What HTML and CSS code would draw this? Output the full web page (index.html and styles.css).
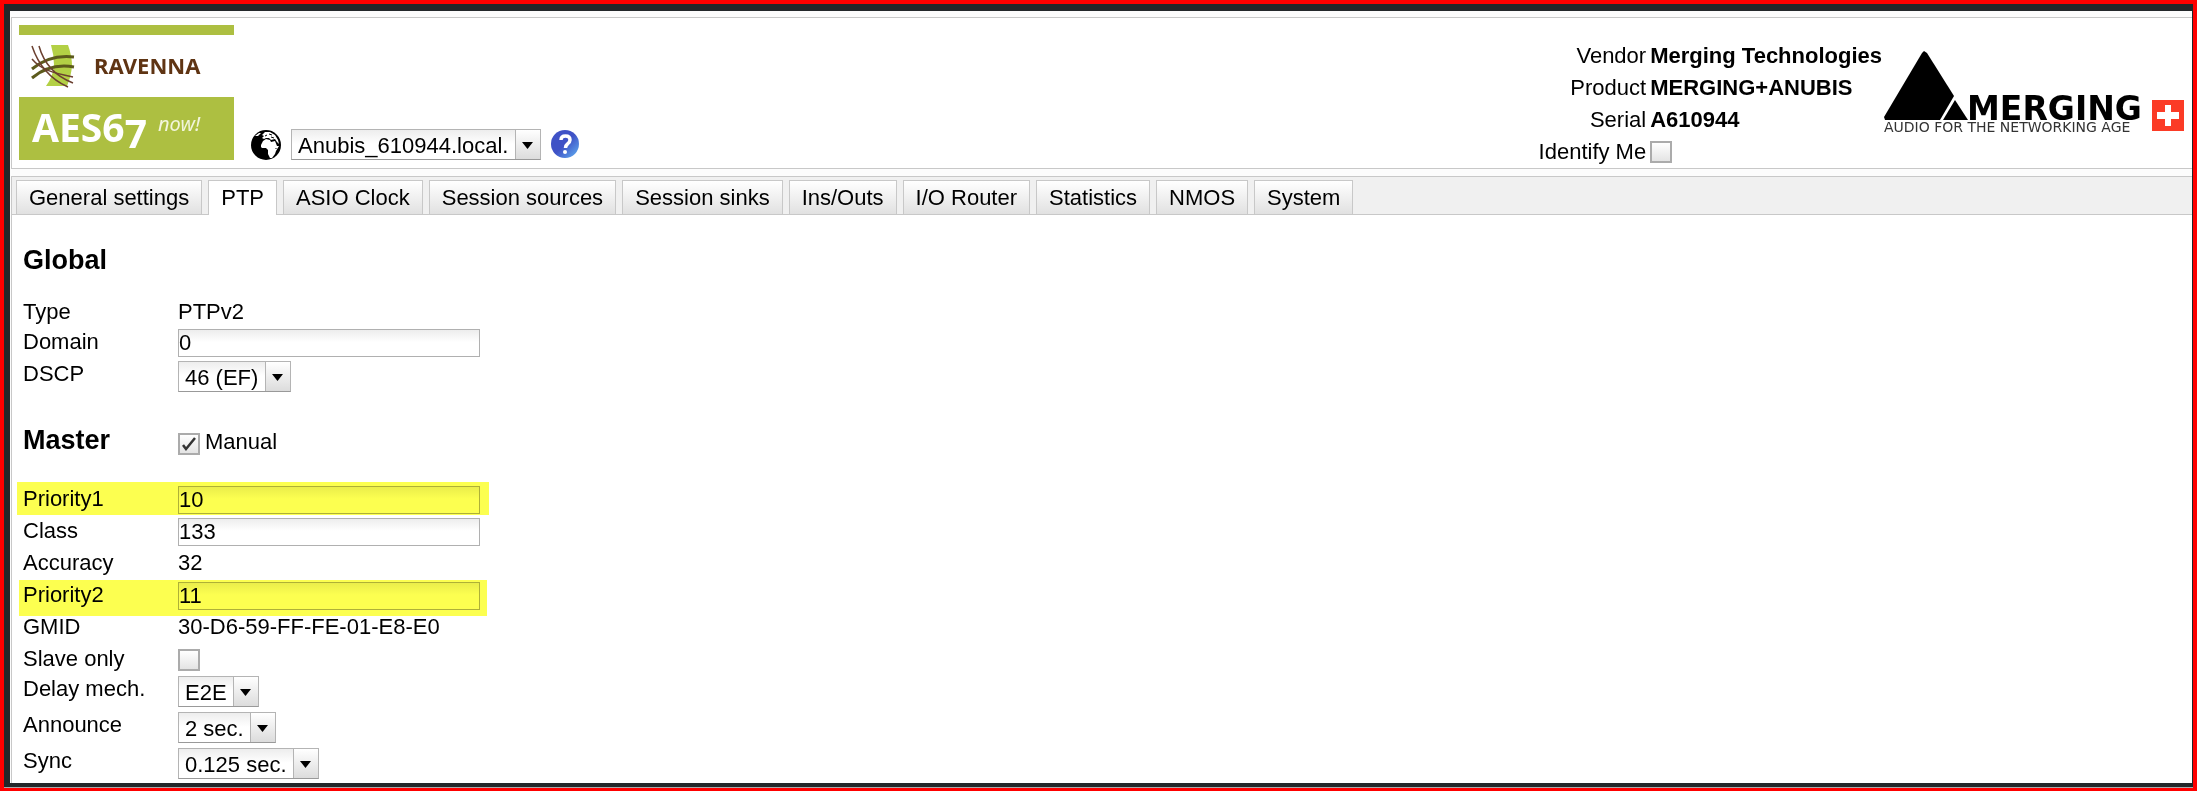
FILE: index.html
```html
<!DOCTYPE html>
<html lang="en">
<head>
    <meta charset="UTF-8">
    <meta name="viewport" content="width=device-width, initial-scale=1.0">
    <title>Anubis_610944.local. - PTP</title>
    <link rel="stylesheet" href="styles.css">
</head>
<body>
<div class="frame">
<div class="page">
    <header class="header">
        <svg class="ravenna-logo" width="215" height="135" viewBox="0 0 215 135" role="img" aria-label="RAVENNA AES67 now!">
            <rect width="215" height="135" fill="#adbf41"/>
            <rect y="10" width="215" height="62" fill="#fff"/>
            <path d="M32 20h17q4 11 4 21-1 11-5 20H27q7-9 8-21 0-10-3-20z" fill="#b3d045"/>
            <g fill="none" stroke="#5c5a1c" stroke-width="3">
                <path d="M13 44C25 34 38 30 55 32"/>
                <path d="M13 53C25 43 38 39 55 42"/>
            </g>
            <g fill="none" stroke="#6b4030" stroke-width="1.5">
                <path d="M13 21C19 39 31 54 49 62"/>
                <path d="M20 21C25 39 36 51 54 58"/>
                <path d="M13 34C22 45 35 48 54 52"/>
            </g>
            <text class="ravenna-name" x="75" y="49">RAVENNA</text>
            <text class="ravenna-aes" x="13" y="117">AES6<tspan dy="6">7</tspan></text>
            <text class="ravenna-now" x="139" y="106">now!</text>
        </svg>

        <div class="device">
            <svg width="30" height="30" viewBox="0 0 30 30" aria-hidden="true">
                <circle cx="15" cy="15" r="15" fill="#000"/>
                <path d="M10 15l2-4 3-2 4 1 1 2 4-1 2 5h2l-3 5-1 3-3 4-2 0-2-4 0-4-2-2-4 0-1-1z" fill="#fff"/>
                <path d="M11 5l3-3 5 0 5 3 3 5 1 4-2-2-2-3-4 1-2-2-3 0-2 1-2-1 2-2z" fill="#fff"/>
                <path d="M4 6l4-3 2 0-3 3z" fill="#fff"/>
                <path d="M14 6l2-1M18 4l3 1M20 7l3 1M25 18l0 1" stroke="#000" fill="none"/>
            </svg>
            <select class="select" aria-label="Device">
                <option>Anubis_610944.local.</option>
            </select>
            <a class="help" href="#help" aria-label="Help">
                <svg width="29" height="29" viewBox="0 0 29 29" aria-hidden="true">
                    <defs>
                        <linearGradient id="helpFill" x1="0" y1="0" x2="1" y2="1">
                            <stop offset="0.5" stop-color="#3f52c6"/>
                            <stop offset="1" stop-color="#62b4f4"/>
                        </linearGradient>
                    </defs>
                    <circle cx="14" cy="14" r="14" fill="url(#helpFill)"/>
                    <path d="M10 10q0-4 4.500-4t4.500 4q0 2-2.500 4-2 1.500-2 4" fill="none" stroke="#fff" stroke-width="3.500"/>
                    <circle cx="14" cy="22" r="2" fill="#fff"/>
                </svg>
            </a>
        </div>

        <div class="info">
            <span class="info-label">Vendor</span><b>Merging Technologies</b>
            <span class="info-label">Product</span><b>MERGING+ANUBIS</b>
            <span class="info-label">Serial</span><b>A610944</b>
            <label class="info-label" for="identify">Identify Me</label>
            <input class="checkbox" type="checkbox" id="identify">
        </div>

        <svg class="merging-logo" width="300" height="84" viewBox="0 0 300 84" role="img" aria-label="Merging - Audio for the networking age">
            <path d="M40 0l3 2 27 43-14 24H1l-1-3L38 2z" fill="#000"/>
            <path d="M71 49l13 20H59z" fill="#000"/>
            <text class="merging-name" x="83" y="69">MERGING</text>
            <text class="merging-tag" x="0" y="81">AUDIO FOR THE NETWORKING AGE</text>
            <rect x="268" y="49" width="32" height="31" fill="#fb3b26"/>
            <path d="M281 54h6v7h8v7h-8v7h-6v-7h-8v-7h8z" fill="#fff"/>
        </svg>
    </header>

    <nav class="tabs">
        <a class="tab" href="#general">General settings</a>
        <a class="tab active" href="#ptp">PTP</a>
        <a class="tab" href="#asio">ASIO Clock</a>
        <a class="tab" href="#sources">Session sources</a>
        <a class="tab" href="#sinks">Session sinks</a>
        <a class="tab" href="#ins-outs">Ins/Outs</a>
        <a class="tab" href="#router">I/O Router</a>
        <a class="tab" href="#statistics">Statistics</a>
        <a class="tab" href="#nmos">NMOS</a>
        <a class="tab" href="#system">System</a>
    </nav>

    <main class="content">
        <h2 class="title">Global</h2>
        <div class="settings">
            <div class="row row-check">
                <span class="name">Type</span>
                <span class="value">PTPv2</span>
            </div>
            <div class="row">
                <label class="name" for="domain">Domain</label>
                <input class="text" type="text" id="domain" value="0">
            </div>
            <div class="row row-select">
                <label class="name" for="dscp">DSCP</label>
                <select class="select" id="dscp"><option>46 (EF)</option></select>
            </div>
        </div>

        <div class="master">
            <h2 class="title">Master</h2>
            <input class="checkbox" type="checkbox" id="manual" checked>
            <label for="manual">Manual</label>
        </div>
        <div class="settings">
            <div class="row">
                <label class="name" for="priority1">Priority1</label>
                <input class="text" type="text" id="priority1" value="10">
                <span class="marker marker-first"></span>
            </div>
            <div class="row">
                <label class="name" for="class">Class</label>
                <input class="text" type="text" id="class" value="133">
            </div>
            <div class="row">
                <span class="name">Accuracy</span>
                <span class="value">32</span>
            </div>
            <div class="row">
                <label class="name" for="priority2">Priority2</label>
                <input class="text" type="text" id="priority2" value="11">
                <span class="marker marker-second"></span>
            </div>
            <div class="row">
                <span class="name">GMID</span>
                <span class="value">30-D6-59-FF-FE-01-E8-E0</span>
            </div>
            <div class="row row-check">
                <label class="name" for="slave">Slave only</label>
                <input class="checkbox" type="checkbox" id="slave">
            </div>
            <div class="row row-select">
                <label class="name" for="delay">Delay mech.</label>
                <select class="select" id="delay"><option>E2E</option></select>
            </div>
            <div class="row row-select">
                <label class="name" for="announce">Announce</label>
                <select class="select" id="announce"><option>2 sec.</option></select>
            </div>
            <div class="row row-select">
                <label class="name" for="sync">Sync</label>
                <select class="select" id="sync"><option>0.125 sec.</option></select>
            </div>
        </div>
    </main>
</div>
</div>
</body>
</html>
```
FILE: styles.css
```css
* {
    box-sizing: border-box;
}
body {
    margin: 0;
    font-family: "Liberation Sans", Arial, sans-serif;
    font-size: 22px;
    line-height: 26px;
    color: #000;
}
.frame {
    display: flex;
    min-height: 100vh;
    padding-bottom: 1px;
    border: 4px solid #ff0000;
    border-bottom-width: 3px;
    background: #aaa;
}
.page {
    flex: 1;
    display: flex;
    flex-direction: column;
    padding: 6px 0 0 1px;
    border: solid #23272a;
    border-width: 7px 1px 4px 6px;
    background: #fcfcfc;
}
.header {
    display: flex;
    align-items: flex-start;
    padding: 7px 8px 0 7px;
    border: 1px solid #c8c8c8;
    border-right: none;
    background: #fff;
}
.ravenna-logo {
    flex: none;
}
.ravenna-name {
    font: bold 22px "Noto Sans", sans-serif;
    fill: #5f3413;
}
.ravenna-aes {
    font: bold 39px "Noto Sans", sans-serif;
    fill: #fff;
}
.ravenna-now {
    font: italic 20px "Noto Sans", sans-serif;
    fill: #f2f5dc;
}
.device {
    display: flex;
    align-items: center;
    align-self: flex-end;
    gap: 10px;
    margin: 0 0 8px 17px;
}
.device svg {
    display: block;
}
.info {
    display: grid;
    grid-template-columns: auto auto;
    grid-auto-rows: 32px;
    column-gap: 4px;
    align-items: center;
    margin: 15px 2px 0 auto;
}
.info-label {
    text-align: right;
}
.merging-logo {
    flex: none;
    margin-top: 26px;
}
.merging-name {
    font: bold 33px "DejaVu Sans", sans-serif;
}
.merging-tag {
    font: 14px "DejaVu Sans", sans-serif;
    fill: #333;
}

.tabs {
    display: flex;
    gap: 6px;
    margin-top: 7px;
    padding: 3px 4px 0;
    border: 1px solid #c8c8c8;
    border-right: none;
    background: #f0f0f0;
}
.tab {
    height: 34px;
    padding: 4px 12px 0;
    border: 1px solid #c8c8c8;
    border-bottom: none;
    background: linear-gradient(#fff, #e1e1e1);
    color: #000;
    text-decoration: none;
    white-space: nowrap;
}
.tab.active {
    margin-bottom: -1px;
    height: 35px;
    background: #fff;
}

.content {
    flex: 1;
    padding: 32px 11px 0;
    border-left: 1px solid #c8c8c8;
    background: #fff;
}
.title {
    margin: 0;
    font-size: 27px;
    line-height: 26px;
}
.settings {
    margin-top: 24px;
}
.row {
    position: relative;
    display: grid;
    grid-template-columns: 155px auto;
    align-items: start;
    justify-content: start;
    height: 32px;
    padding-top: 2px;
}
.row-check {
    height: 30px;
}
.row-select {
    height: 36px;
}
.row .checkbox {
    margin-top: 3px;
}
.master {
    display: grid;
    grid-template-columns: 155px auto auto;
    justify-content: start;
    align-items: end;
    margin-top: 32px;
}
.master .title {
    align-self: start;
}
.master label {
    padding: 2px 0 0 5px;
}
.master + .settings {
    margin-top: 29px;
}
.text {
    width: 302px;
    height: 28px;
    padding: 0;
    border: 1px solid #b0b0b0;
    border-radius: 0;
    background: linear-gradient(#ededed, #fff 12px);
    font: inherit;
}
.select {
    height: 31px;
    padding: 3px 31px 0 6px;
    border: 1px solid #b4b4b4;
    border-bottom-color: #999;
    border-radius: 0;
    appearance: none;
    background:
        url("data:image/svg+xml,%3Csvg xmlns='http://www.w3.org/2000/svg' width='11' height='7'%3E%3Cpath d='M0 0h11L5.500 7z'/%3E%3C/svg%3E") right 7px top 12px no-repeat,
        linear-gradient(#b4b4b4, #b4b4b4) right 24px top / 1px 100% no-repeat,
        linear-gradient(#fff, #dcdcdc) right top / 24px 100% no-repeat,
        linear-gradient(#ededed, #fff 14px);
    color: #000;
    font: inherit;
}
.checkbox {
    width: 22px;
    height: 22px;
    margin: 0;
    border: 2px solid #ababab;
    appearance: none;
    background: linear-gradient(#fff, #e4e4e4);
}
.checkbox:checked {
    background:
        url("data:image/svg+xml,%3Csvg xmlns='http://www.w3.org/2000/svg' width='14' height='14'%3E%3Cpath d='M1 8l3 4L13 1' fill='none' stroke='%23333' stroke-width='2.500'/%3E%3C/svg%3E") center no-repeat,
        linear-gradient(#fff, #e4e4e4);
}

/* highlighter strokes over the priority rows */
.marker {
    position: absolute;
    mix-blend-mode: multiply;
    background: #fcff50;
    pointer-events: none;
}
.marker-first {
    top: -2px;
    left: -6px;
    width: 472px;
    height: 33px;
}
.marker-second {
    top: 0;
    left: -4px;
    width: 468px;
    height: 36px;
}
```
